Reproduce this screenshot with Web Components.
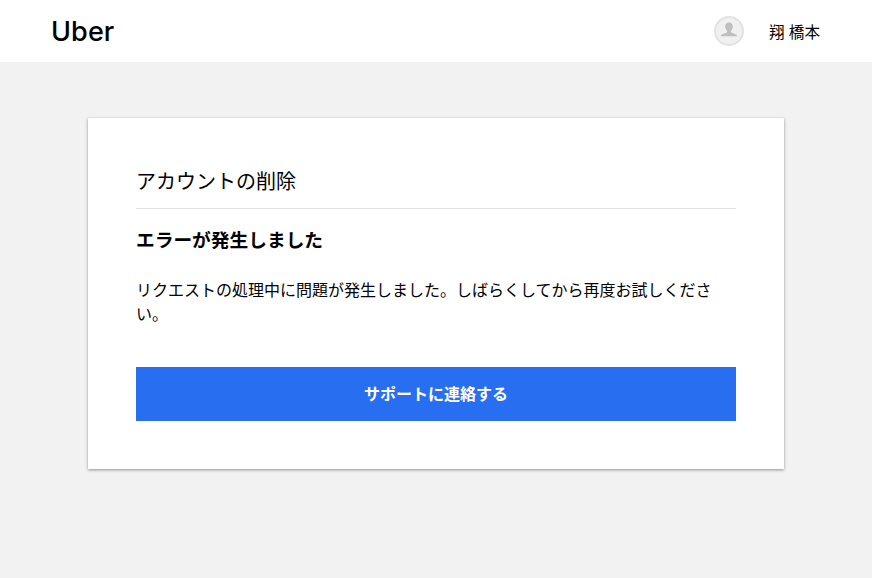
<!DOCTYPE html>
<html lang="ja">
<head>
<meta charset="utf-8">
<title>アカウントの削除</title>
<style>
  html, body { margin: 0; height: 100%; }
  body {
    background: #f2f2f2;
    color: #000;
    font-family: "Liberation Sans", "Noto Sans CJK JP", sans-serif;
  }
</style>
</head>
<body>
<uber-header username="翔 橋本"></uber-header>
<error-card>
  <span slot="title">アカウントの削除</span>
  <span slot="heading">エラーが発生しました</span>
  リクエストの処理中に問題が発生しました。しばらくしてから再度お試しください。
  <span slot="action">サポートに連絡する</span>
</error-card>

<script>
const headerTemplate = document.createElement("template");
headerTemplate.innerHTML = `
<style>
  :host {
    display: flex;
    align-items: center;
    justify-content: space-between;
    height: 62px;
    padding: 0 52px 0 51px;
    background: #fff;
  }
  .logo {
    font-family: "Inter", sans-serif;
    font-size: 27px;
    font-weight: 450;
    line-height: 1;
    letter-spacing: 0.1px;
  }
  .user {
    display: flex;
    align-items: center;
    gap: 25px;
    font-size: 15.6px;
  }
  .name { margin-top: -1px; }
  svg { display: block; }
</style>
<div class="logo">Uber</div>
<div class="user">
  <svg width="30" height="30" viewBox="0 0 30 30">
    <circle cx="15" cy="15" r="14" fill="#f0f0f0" stroke="#e2e2e2" stroke-width="2"/>
    <path d="M15 6.500c-2.500 0-3.800 1.800-3.800 4.100 0 1.800.9 3.300 1.800 4.200v1.600c-1.600.9-5.800 1.300-6.400 3.900h16.800c-.6-2.600-4.800-3-6.400-3.900v-1.600c.9-.9 1.800-2.400 1.800-4.200 0-2.300-1.300-4.100-3.800-4.100z" fill="#bfbfbf"/>
  </svg>
  <span class="name"></span>
</div>
`;

class UberHeader extends HTMLElement {
  constructor() {
    super();
    this.attachShadow({ mode: "open" });
  }

  connectedCallback() {
    this.shadowRoot.appendChild(headerTemplate.content.cloneNode(true));
    this.shadowRoot.querySelector(".name").textContent = this.getAttribute("username") || "";
  }
}

const cardTemplate = document.createElement("template");
cardTemplate.innerHTML = `
<style>
  :host {
    display: block;
    width: 600px;
    margin: 56px 0 0 88px;
    padding: 48px;
    background: #fff;
    box-shadow: 0 1px 3px rgba(0, 0, 0, 0.4);
  }
  .title {
    padding-top: 1px;
    padding-bottom: 11px;
    border-bottom: 1px solid #e2e2e2;
    font-size: 20px;
    line-height: 30px;
  }
  .heading {
    margin-top: 20px;
    font-size: 18.72px;
    font-weight: 700;
    line-height: 24px;
  }
  .body {
    margin-top: 26px;
    font-size: 16px;
    line-height: 24px;
  }
  .action {
    display: flex;
    align-items: center;
    justify-content: center;
    box-sizing: border-box;
    height: 54px;
    margin-top: 40px;
    padding-bottom: 2px;
    background: #276ef1;
    color: #fff;
    font-size: 16px;
    font-weight: 700;
  }
</style>
<div class="title"><slot name="title"></slot></div>
<div class="heading"><slot name="heading"></slot></div>
<div class="body"><slot></slot></div>
<div class="action"><slot name="action"></slot></div>
`;

class ErrorCard extends HTMLElement {
  constructor() {
    super();
    this.attachShadow({ mode: "open" });
    this.shadowRoot.appendChild(cardTemplate.content.cloneNode(true));
  }
}

window.customElements.define("uber-header", UberHeader);
window.customElements.define("error-card", ErrorCard);
</script>
</body>
</html>
